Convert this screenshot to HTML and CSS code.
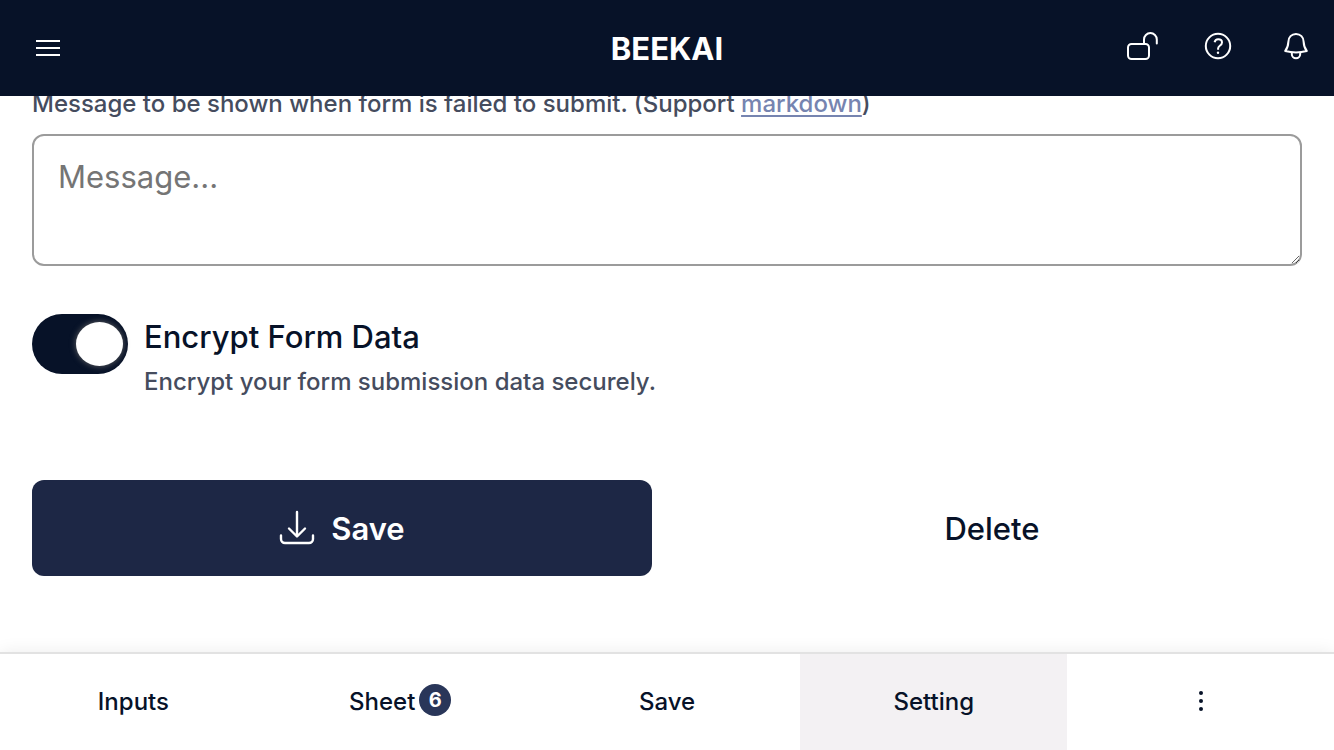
FILE: index.html
```html
<!DOCTYPE html>
<html lang="en">
<head>
<meta charset="utf-8">
<meta name="viewport" content="width=device-width, initial-scale=1">
<title>BEEKAI</title>
<link rel="stylesheet" href="styles.css">
</head>
<body>
<header class="topbar">
  <button class="icon-btn menu-btn" type="button" aria-label="Menu">
    <svg width="24" height="16" viewBox="0 0 24 16" fill="none" stroke="currentColor" stroke-width="2"><path d="M0 1h24M0 8h24M0 15h24"/></svg>
  </button>
  <h1 class="brand">BEEKAI</h1>
  <div class="actions">
    <button class="icon-btn" type="button" aria-label="Unlock">
      <svg class="lock" width="32" height="32" viewBox="0 0 32 32" fill="none" stroke="currentColor" stroke-width="2" stroke-linecap="round"><rect x="4" y="14" width="21" height="15" rx="3.500"/><path d="M20 14V9.500a6.400 6.400 0 0 1 12.800 0V13.500"/></svg>
    </button>
    <button class="icon-btn" type="button" aria-label="Help">
      <svg width="32" height="32" viewBox="0 0 32 32" fill="none" stroke="currentColor" stroke-width="2"><circle cx="16" cy="16" r="12.200"/><path d="M12.600 12.200c.4-2 1.700-3 3.600-3 2.200 0 3.800 1.300 3.800 3.200 0 1.600-.9 2.400-2.200 3.300-1.200.9-1.700 1.500-1.700 2.900v1.200"/><circle cx="16" cy="22.800" r="1.200" fill="currentColor" stroke="none"/></svg>
    </button>
    <button class="icon-btn" type="button" aria-label="Notifications">
      <svg width="32" height="32" viewBox="0 0 32 32" fill="none" stroke="currentColor" stroke-width="2" stroke-linejoin="round"><path d="M16 4c-4.600 0-7.400 3.400-7.600 7.600-.2 4.600-.9 6.600-3.200 9.400 6.600 1.700 15 1.700 21.600 0-2.300-2.800-3-4.800-3.200-9.400C23.400 7.400 20.600 4 16 4z"/><path d="M11.800 22.200v1.800a4.200 4.200 0 0 0 8.400 0v-1.800"/></svg>
    </button>
  </div>
</header>

<main class="content">
  <form class="settings">
    <label class="hint" for="fail-message">Message to be shown when form is failed to submit. (Support <a class="link" href="#markdown">markdown</a>)</label>
    <textarea class="message" id="fail-message" placeholder="Message..."></textarea>
    <div class="option">
      <input class="switch" type="checkbox" role="switch" id="encrypt" aria-describedby="encrypt-hint" checked>
      <div class="option-text">
        <label class="option-title" for="encrypt">Encrypt Form Data</label>
        <p class="hint" id="encrypt-hint">Encrypt your form submission data securely.</p>
      </div>
    </div>
    <div class="form-actions">
      <button class="btn btn-primary" type="button">
        <svg width="36" height="36" viewBox="0 0 36 36" fill="none" stroke="currentColor" stroke-width="2.400" stroke-linecap="round" stroke-linejoin="round"><path d="M18 2v24M10 18.500l8 8 8-8M2 25.500V29a4 4 0 0 0 4 4h24a4 4 0 0 0 4-4v-3.500"/></svg>
        <span>Save</span>
      </button>
      <button class="btn" type="button">Delete</button>
    </div>
  </form>
</main>

<nav class="tabs">
  <button class="tab" type="button">Inputs</button>
  <button class="tab" type="button">Sheet<span class="badge">6</span></button>
  <button class="tab" type="button">Save</button>
  <button class="tab tab-active" type="button" aria-current="page">Setting</button>
  <button class="tab" type="button" aria-label="More">
    <svg width="4" height="20" viewBox="0 0 4 20" fill="currentColor"><circle cx="2" cy="2" r="2"/><circle cx="2" cy="10" r="2"/><circle cx="2" cy="18" r="2"/></svg>
  </button>
</nav>
</body>
</html>
```

FILE: styles.css
```css
* {
  box-sizing: border-box;
}

body {
  margin: 0;
  height: 100vh;
  display: flex;
  flex-direction: column;
  overflow: hidden;
  background: #fff;
  color: #071228;
  font-family: Inter, "Liberation Sans", sans-serif;
}

button {
  padding: 0;
  border: 0;
  background: none;
  color: inherit;
  font: inherit;
  cursor: pointer;
}

svg {
  display: block;
}

.topbar {
  flex: none;
  height: 96px;
  padding: 0 22px 0 32px;
  display: flex;
  justify-content: space-between;
  align-items: center;
  background: #071228;
  color: #fff;
}

.icon-btn {
  display: flex;
  align-items: center;
  justify-content: center;
  width: 32px;
  height: 32px;
}

.lock {
  overflow: visible;
}

.menu-btn {
  margin-right: 146px;
}

.brand {
  margin: 0;
  padding-top: 2px;
  font-size: 31px;
  line-height: 40px;
  font-weight: 700;
}

.actions {
  display: flex;
  gap: 46px;
  padding-bottom: 4px;
}

/* The form rests against the tab bar; its start slides under the header. */
.content {
  flex: 1;
  min-height: 0;
  display: flex;
  flex-direction: column;
  justify-content: flex-end;
  overflow: hidden;
  padding: 0 32px 76px;
}

.settings {
  display: flex;
  flex-direction: column;
}

.hint {
  margin: 0;
  color: #454c5e;
  font-size: 24px;
  line-height: 32px;
  font-weight: 500;
}

.link {
  color: #7684b0;
  text-decoration: underline;
  text-decoration-thickness: 2px;
  text-underline-offset: 3px;
}

.message {
  width: 100%;
  height: 132px;
  margin-top: 14px;
  padding: 21px 24px;
  border: 2px solid #9b9b9b;
  border-radius: 12px;
  background: #fff;
  color: inherit;
  font: 400 31px/40px Inter, "Liberation Sans", sans-serif;
  resize: vertical;
}

.message::placeholder {
  color: #757575;
}

.option {
  margin-top: 48px;
  display: flex;
  gap: 16px;
}

.switch {
  appearance: none;
  flex: none;
  width: 96px;
  height: 60px;
  margin: 0;
  padding: 8px 5px;
  display: flex;
  border-radius: 30px;
  background: #071228;
}

.switch::before {
  content: "";
  width: 47px;
  height: 44px;
  border-radius: 50%;
  background: #fff;
  box-shadow: 0 0 6px #666;
}

.switch:checked::before {
  margin-left: auto;
}

.option-title {
  display: block;
  margin: 3px 0 9px;
  font-size: 31px;
  line-height: 40px;
  font-weight: 500;
}

.form-actions {
  margin-top: 82px;
  display: grid;
  grid-template-columns: 1fr 1fr;
  gap: 30px;
}

.btn {
  height: 96px;
  display: flex;
  align-items: center;
  justify-content: center;
  gap: 16px;
  border-radius: 12px;
  font-size: 31px;
  font-weight: 500;
}

.btn-primary {
  background: #1d2745;
  color: #fff;
  font-weight: 600;
}

.tabs {
  flex: none;
  display: grid;
  grid-template-columns: repeat(5, 1fr);
  border-top: 2px solid #e2e2e2;
  background: #fff;
  box-shadow: 0 0 16px rgba(0, 0, 0, 0.08);
}

.tab {
  height: 96px;
  padding-bottom: 2px;
  display: flex;
  align-items: center;
  justify-content: center;
  gap: 4px;
  font-size: 24px;
  font-weight: 500;
}

.tab-active {
  background: #f3f1f3;
}

.badge {
  width: 32px;
  height: 32px;
  margin-bottom: 2px;
  border-radius: 50%;
  background: #293659;
  color: #fff;
  font-size: 20px;
  line-height: 32px;
  font-weight: 700;
  text-align: center;
}
```
